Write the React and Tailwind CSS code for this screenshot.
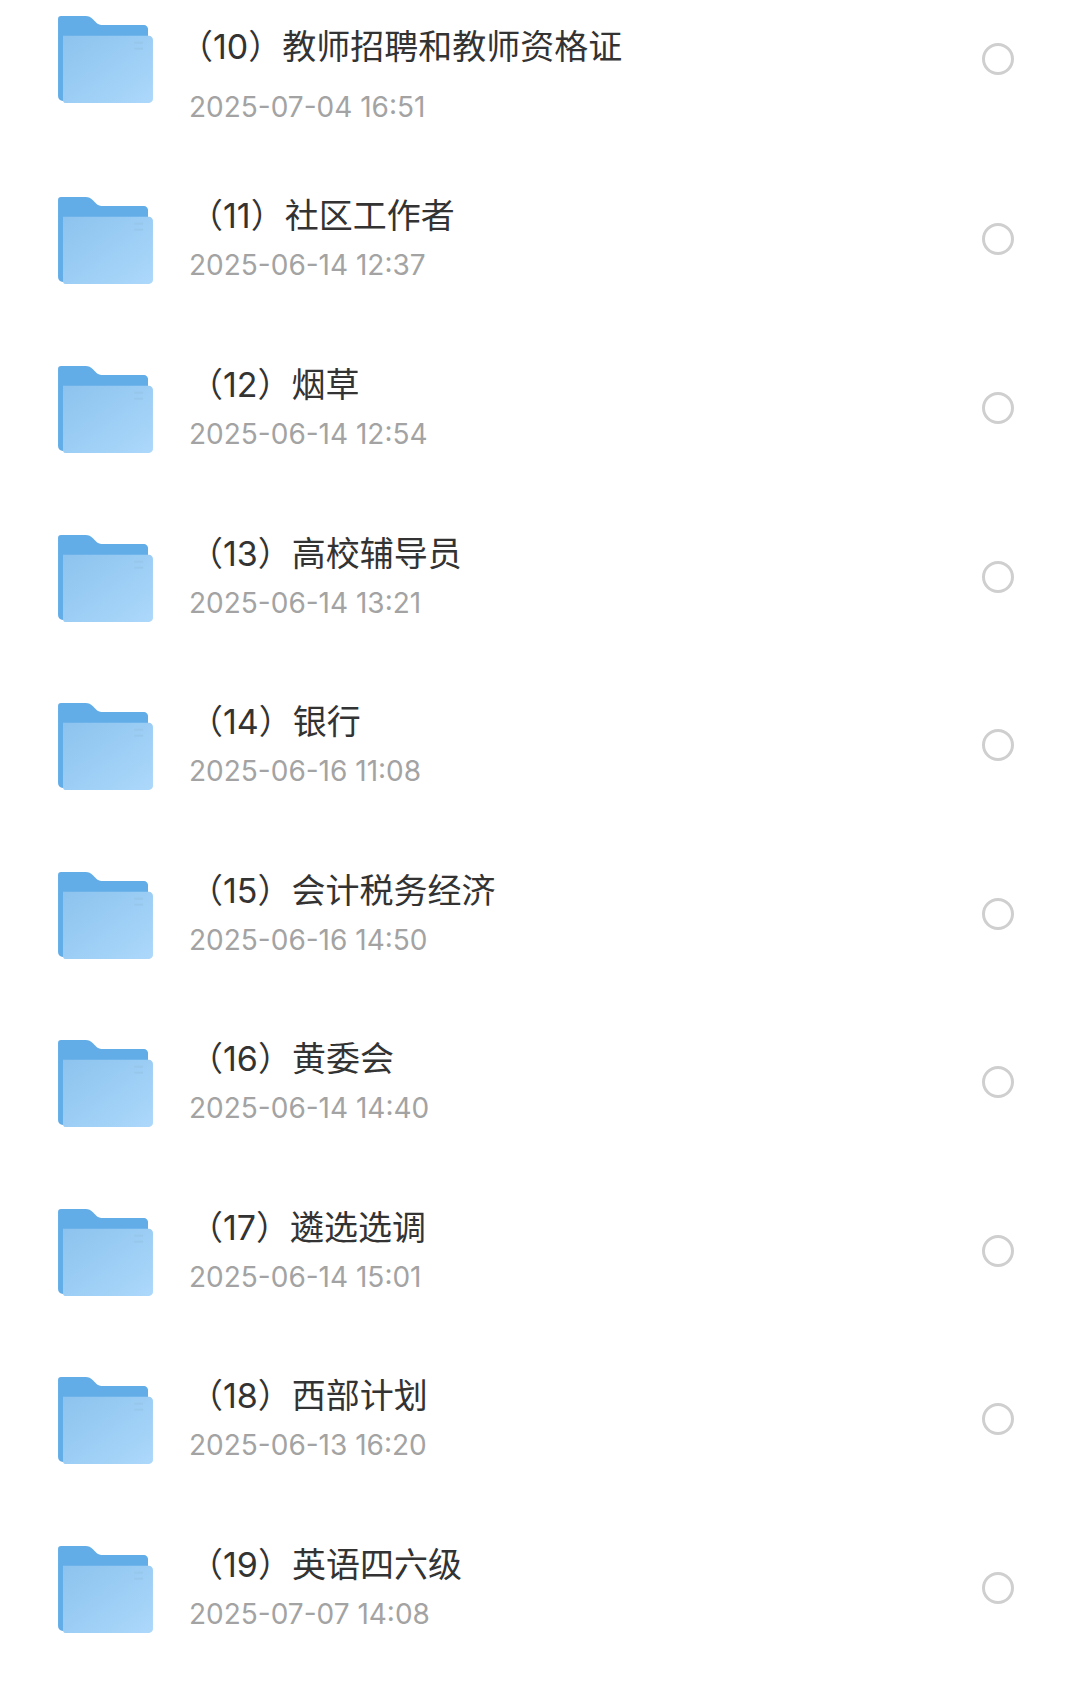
const rows = [
  { t: "（10）教师招聘和教师资格证", d: "2025-07-04 16:51", h: "h-[177px]", c: "pt-[16px]", g: "mt-[24px]", tx: "ml-[-10px]", tt: "mt-[13px]", ck: "mt-[27px]" },
  { t: "（11）社区工作者", d: "2025-06-14 12:37", h: "h-[169px]", c: "pt-[20px]" },
  { t: "（12）烟草", d: "2025-06-14 12:54" },
  { t: "（13）高校辅导员", d: "2025-06-14 13:21" },
  { t: "（14）银行", d: "2025-06-16 11:08" },
  { t: "（15）会计税务经济", d: "2025-06-16 14:50" },
  { t: "（16）黄委会", d: "2025-06-14 14:40" },
  { t: "（17）遴选选调", d: "2025-06-14 15:01" },
  { t: "（18）西部计划", d: "2025-06-13 16:20" },
  { t: "（19）英语四六级", d: "2025-07-07 14:08" },
];

function Folder() {
  return (
    <svg width="95" height="87" viewBox="0 0 96 88" className="shrink-0">
      <defs>
        <linearGradient id="ff" x1="0" y1="0" x2="1" y2="1">
          <stop offset="0" stopColor="#8cc3ee" />
          <stop offset="1" stopColor="#acd8fb" />
        </linearGradient>
      </defs>
      <path d="M3 0h25c3 0 5 1 7 3l4 4c1 1 3 2 5 2h43c2 0 4 2 4 4v73H5c-3 0-5-2-5-5V3c0-2 1-3 3-3z" fill="#62ade8" />
      <path d="M5 20h87c2 0 4 2 4 4v60c0 2-2 4-4 4H7c-1 0-2-1-2-3z" fill="url(#ff)" />
      <rect x="77" y="26" width="9" height="2" fill="#97c7eb" />
      <rect x="77" y="32" width="9" height="2" fill="#97c7eb" />
    </svg>
  );
}

export default function App() {
  return (
    <div className="w-[1080px] h-[1693px] overflow-hidden bg-white font-['Inter','Noto_Sans_CJK_SC',sans-serif]">
      {rows.map((r) => (
        <div key={r.t} className={`flex items-start pl-[58px] pr-[66px] ${r.h || "h-[168.5px]"} ${r.c || "pt-[20px]"}`}>
          <Folder />
          <div className="ml-[36px] flex-1 min-w-0">
            <div className={`text-[34px] leading-[36px] text-[#333333] whitespace-nowrap ${r.tt || "mt-[1px]"} ${r.tx || "ml-[0px]"}`}>{r.t}</div>
            <div className={`text-[28px] leading-[36px] text-[#a3a3a3] whitespace-nowrap ${r.g || "mt-[13px]"}`}>{r.d}</div>
          </div>
          <div className={`w-[32px] h-[32px] rounded-full border-[3px] border-[#cfcfcf] shrink-0 ${r.ck || "mt-[26px]"}`} />
        </div>
      ))}
    </div>
  );
}
